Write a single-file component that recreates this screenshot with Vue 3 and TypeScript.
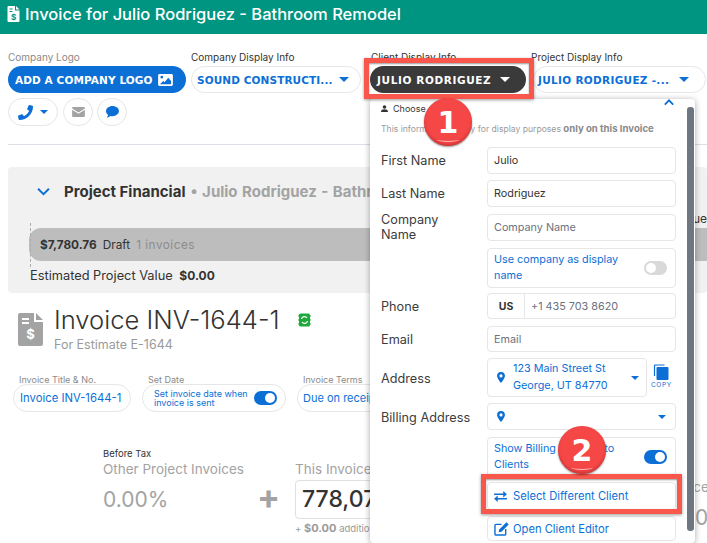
<script setup lang="ts">
const rows = [
  { label: 'First Name', value: 'Julio', filled: true },
  { label: 'Last Name', value: 'Rodriguez', filled: true },
]
</script>

<template>
  <div class="page">
    <header class="topbar">
      <svg class="doc" viewBox="0 0 12 16" width="13" height="16"><path fill="#fff" d="M1 0h6.500v4.500H12V15a1 1 0 0 1-1 1H1a1 1 0 0 1-1-1V1a1 1 0 0 1 1-1zM8.500 0 12 3.500H8.500z"/><path stroke="#009581" stroke-width="1.200" d="M2 3h3M2 5.500h3"/><text x="6" y="13.500" font-size="8" font-weight="700" text-anchor="middle" fill="#009581" font-family="Inter">$</text></svg>
      <span>Invoice for Julio Rodriguez - Bathroom Remodel</span>
    </header>

    <section class="selectors">
      <div class="selector-row">
        <div class="field w-logo">
          <label class="muted">Company Logo</label>
          <button class="pill solid">ADD A COMPANY LOGO
            <svg viewBox="0 0 16 13" width="15" height="12"><path fill="#fff" fill-rule="evenodd" d="M1.500 0h13A1.500 1.500 0 0 1 16 1.500v10a1.500 1.500 0 0 1-1.500 1.500h-13A1.500 1.500 0 0 1 0 11.500v-10A1.500 1.500 0 0 1 1.500 0zM4 2a1.500 1.500 0 1 0 0 3 1.500 1.500 0 0 0 0-3zM2 11h12V7.500L11 4 7 9 5.500 7.500z"/></svg>
          </button>
        </div>
        <div class="field w-company">
          <label>Company Display Info</label>
          <button class="pill outline"><span>SOUND CONSTRUCTI...</span><i class="caret"></i></button>
        </div>
        <div class="field w-client">
          <label>Client Display Info</label>
          <button class="pill dark"><span>JULIO RODRIGUEZ</span><i class="caret white"></i></button>
        </div>
        <div class="field w-project">
          <label>Project Display Info</label>
          <button class="pill outline"><span>JULIO RODRIGUEZ -...</span><i class="caret"></i></button>
        </div>
      </div>
      <div class="contact-row">
        <button class="round wide">
          <svg viewBox="0 0 512 512" width="15" height="15"><path fill="#0c6fd6" d="M493 24 389 0a24 24 0 0 0-27 14l-48 112a24 24 0 0 0 7 28l61 50a371 371 0 0 1-177 177l-50-61a24 24 0 0 0-28-7L15 361a24 24 0 0 0-14 28l24 104a24 24 0 0 0 23 19c256 0 464-207 464-464a24 24 0 0 0-19-24z"/></svg>
          <i class="caret small"></i>
        </button>
        <button class="round">
          <svg viewBox="0 0 14 11" width="13" height="10"><path fill="#a3a3a3" d="M1 0h12a1 1 0 0 1 1 1v.600L7 6 0 1.600V1a1 1 0 0 1 1-1zM0 3l7 4.400L14 3v7a1 1 0 0 1-1 1H1a1 1 0 0 1-1-1z"/></svg>
        </button>
        <button class="round">
          <svg viewBox="0 0 14 13" width="13" height="12"><path fill="#0c6fd6" d="M7 0c3.900 0 7 2.500 7 5.500S10.900 11 7 11c-.800 0-1.600-.100-2.300-.300C3.800 11.500 2.400 12.500.800 12.500c.800-.900 1.300-1.900 1.400-2.800C.800 8.700 0 7.200 0 5.500 0 2.500 3.100 0 7 0z"/></svg>
        </button>
      </div>
    </section>

    <hr class="rule" />

    <section class="financial">
      <div class="fin-title">
        <svg viewBox="0 0 12 8" width="13" height="9"><path d="M1 1.500 6 6.500 11 1.500" fill="none" stroke="#0c6fd6" stroke-width="1.800"/></svg>
        <b>Project Financial</b><span class="fin-sub">• Julio Rodriguez - Bathroom Remodel</span>
      </div>
      <div class="value-label">Contract Value</div>
      <div class="bar"><b>$7,780.76</b><span>Draft</span><span class="faint">1 invoices</span></div>
      <div class="est">Estimated Project Value <b>$0.00</b></div>
    </section>

    <section class="heading">
      <svg viewBox="0 0 25 33" width="25" height="33"><path fill="#a3a3a3" d="M2 0h14v9h9v22a2 2 0 0 1-2 2H2a2 2 0 0 1-2-2V2a2 2 0 0 1 2-2zM18 0l7 7h-7z"/><path stroke="#fff" stroke-width="2" d="M4 6h7M4 10h7"/><text x="12.500" y="26" font-size="13" font-weight="700" fill="#fff" text-anchor="middle" font-family="Inter">$</text></svg>
      <div class="heading-text">
        <h1>Invoice INV-1644-1
          <svg class="sync" viewBox="0 0 13 14" width="13" height="14"><rect x="1" y="0.500" width="11" height="13" rx="1.500" fill="#1fa83c"/><path d="M3.500 6A3 3 0 0 1 9 5M9.500 8A3 3 0 0 1 4 9" fill="none" stroke="#fff" stroke-width="1.300"/><path d="M0 3h1M0 7h1M0 11h1M12 3h1M12 7h1M12 11h1" stroke="#1fa83c"/></svg>
        </h1>
        <p>For Estimate E-1644</p>
      </div>
    </section>

    <section class="meta">
      <div class="meta-item">
        <label>Invoice Title &amp; No.</label>
        <div class="meta-pill title">Invoice INV-1644-1</div>
      </div>
      <div class="meta-item">
        <label>Set Date</label>
        <div class="meta-pill date"><span>Set invoice date when invoice is sent</span><i class="switch on"></i></div>
      </div>
      <div class="meta-item">
        <label>Invoice Terms</label>
        <div class="meta-pill terms">Due on receipt</div>
      </div>
    </section>

    <section class="totals">
      <div class="col-other">
        <div class="before">Before Tax</div>
        <div class="tot-label">Other Project Invoices</div>
        <div class="pct">0.00%</div>
      </div>
      <div class="plus">+</div>
      <div class="col-this">
        <div class="tot-label">This Invoice</div>
        <div class="amount">778,076.00</div>
        <div class="add">+ <b>$0.00</b> additional</div>
      </div>
      <div class="col-last">
        <div class="tot-label">Balance</div>
        <div class="pct">0</div>
      </div>
    </section>

    <aside class="panel">
      <svg class="chev" viewBox="0 0 12 8" width="10" height="7"><path d="M1 6.500 6 1.500 11 6.500" fill="none" stroke="#0c6fd6" stroke-width="2.200"/></svg>
      <div class="choose">
        <svg viewBox="0 0 10 10" width="7" height="7"><circle cx="5" cy="2.800" r="2.600" fill="#333"/><path fill="#333" d="M0 10c0-3 2-4 5-4s5 1 5 4z"/></svg>
        Choose a Client
      </div>
      <p class="note">This information is only for display purposes <b>only on this Invoice</b></p>

      <div class="form">
        <template v-for="r in rows" :key="r.label">
          <div class="lab">{{ r.label }}</div>
          <div class="inp val">{{ r.value }}</div>
        </template>
        <div class="lab two">Company<br />Name</div>
        <div class="inp ph">Company Name</div>

        <div></div>
        <div class="inp tall blue"><span>Use company as display name</span><i class="switch off"></i></div>

        <div class="lab">Phone</div>
        <div class="inp short phone"><b>US</b><span>+1 435 703 8620</span></div>

        <div class="lab">Email</div>
        <div class="inp short ph">Email</div>

        <div class="lab lab-tall">Address</div>
        <div class="addr-row">
          <div class="inp tall blue addr">
            <svg class="pin" viewBox="0 0 10 14" width="8" height="11"><path fill="#0c6fd6" fill-rule="evenodd" d="M5 0a5 5 0 0 1 5 5c0 3-5 9-5 9S0 8 0 5a5 5 0 0 1 5-5zm0 3a2 2 0 1 0 0 4 2 2 0 0 0 0-4z"/></svg>
            <span>123 Main Street St George, UT 84770</span><i class="caret small"></i>
          </div>
          <div class="copy">
            <svg viewBox="0 0 15 16" width="16" height="16"><path fill="#0c6fd6" d="M4 3h10a1 1 0 0 1 1 1v11a1 1 0 0 1-1 1H4a1 1 0 0 1-1-1V4a1 1 0 0 1 1-1z"/><path fill="none" stroke="#0c6fd6" stroke-width="1.200" d="M1 12V1.500A.900.900 0 0 1 1.500 1H11"/></svg>
            <span>COPY</span>
          </div>
        </div>

        <div class="lab lab-bill">Billing Address</div>
        <div class="inp blue bill">
          <svg class="pin" viewBox="0 0 10 14" width="8" height="11"><path fill="#0c6fd6" fill-rule="evenodd" d="M5 0a5 5 0 0 1 5 5c0 3-5 9-5 9S0 8 0 5a5 5 0 0 1 5-5zm0 3a2 2 0 1 0 0 4 2 2 0 0 0 0-4z"/></svg>
          <i class="caret small"></i>
        </div>

        <div></div>
        <div class="inp tall blue"><span>Show Billing Address to Clients</span><i class="switch on"></i></div>

        <div></div>
        <div class="inp act tallish blue">
          <svg viewBox="0 0 14 12" width="13" height="11"><path fill="none" stroke="#0c6fd6" stroke-width="1.600" d="M0 3.500h12M2 8.500h12"/><path fill="#0c6fd6" d="M10 0l4 3.500-4 3.500zM4 5v7L0 8.500z"/></svg>
          Select Different Client
        </div>

        <div></div>
        <div class="inp act edit blue">
          <svg viewBox="0 0 16 15" width="15" height="14"><path fill="none" stroke="#0c6fd6" stroke-width="1.500" d="M8 2.500H2a1 1 0 0 0-1 1V13a1 1 0 0 0 1 1h9.500a1 1 0 0 0 1-1V7.500"/><path fill="#0c6fd6" d="M13.300.300l2.400 2.400L8 10.500l-3 .600.600-3z"/></svg>
          Open Client Editor
        </div>
      </div>
      <div class="scrollbar"></div>
    </aside>

    <div class="hl hl-client"></div>
    <div class="hl hl-select"></div>
    <div class="badge b1">1</div>
    <div class="badge b2">2</div>
  </div>
</template>

<style>
html, body { margin: 0; background: #fff; overflow: hidden; }
</style>

<style scoped>
.page {
  position: relative;
  width: 707px;
  height: 543px;
  overflow: hidden;
  font-family: "Inter", "Noto Sans", sans-serif;
  color: #333;
  background: #fff;
}
.topbar {
  height: 34px;
  background: #009581;
  color: #fff;
  display: flex;
  align-items: center;
  gap: 5px;
  padding: 0 0 7px 7px;
  box-sizing: border-box;
  font-size: 16.500px;
  font-weight: 500;
  white-space: nowrap;
}
.selectors { padding: 17px 8px 0; }
.selector-row { display: flex; align-items: flex-start; gap: 5px; }
.field label { display: block; font-size: 10px; height: 15px; line-height: 13px; color: #333; white-space: nowrap; }
.field label.muted { color: #8a8a8a; }
.w-logo { width: 178px; flex: none; }
.w-company { width: 170px; flex: none; }
.w-client { width: 156px; flex: none; margin-left: 4px; }
.w-client label { padding-left: 1px; }
.w-project { width: 173px; flex: none; margin-left: 2px; }
.w-project label { margin-left: -2px; }
.pill {
  height: 27px;
  width: 100%;
  border-radius: 14px;
  box-sizing: border-box;
  border: 1px solid transparent;
  display: flex;
  align-items: center;
  justify-content: space-between;
  padding: 0 11px 0 5px;
  font-family: "DejaVu Sans", sans-serif;
  font-weight: 700;
  font-size: 10.500px;
  letter-spacing: 0.1px;
  white-space: nowrap;
}
.pill.solid { background: #0c6fd6; color: #fff; padding: 0 12px 0 6px; letter-spacing: 0.1px; }
.pill.outline { background: #fff; border-color: #e6e6e6; color: #0c6fd6; }
.pill.dark { background: #3a3a3a; color: #fff; padding: 0 15px 0 6px; letter-spacing: 0.6px; }
.w-project .pill { padding-right: 16px; padding-left: 4px; letter-spacing: 0.3px; }
.caret {
  display: inline-block;
  width: 0;
  height: 0;
  border-left: 5px solid transparent;
  border-right: 5px solid transparent;
  border-top: 5px solid #0c6fd6;
}
.caret.white { border-top-color: #fff; }
.caret.small { border-left-width: 4.500px; border-right-width: 4.500px; border-top-width: 4.500px; }
.contact-row { display: flex; gap: 4px; margin-top: 5px; }
.round {
  width: 30px;
  height: 28px;
  border: 1px solid #e6e6e6;
  border-radius: 14px;
  background: #fff;
  padding: 0;
  display: flex;
  align-items: center;
  justify-content: center;
}
.round.wide { width: 50px; gap: 7px; margin-right: 1px; }
.rule { border: 0; border-top: 1px solid #dcdfe6; margin: 18px 0 0 8px; }
.financial {
  margin: 22px 0 0 8px;
  height: 126px;
  background: #f1f1f1;
  border-radius: 4px;
  padding: 15px 0 0 22px;
  box-sizing: border-box;
}
.fin-title { display: flex; align-items: center; font-size: 15px; height: 18px; white-space: nowrap; }
.fin-title svg { margin: 0 14px 0 7px; }
.fin-title b { color: #333; font-weight: 700; }
.fin-sub { color: #a3a3a3; font-weight: 700; margin-left: 5px; word-spacing: 1px; }
.value-label { margin-top: 10px; height: 18px; line-height: 18px; font-size: 12px; text-align: right; white-space: nowrap; }
.bar {
  position: relative;
  height: 33px;
  margin-left: -1px;
  background: #bdbdbd;
  border-radius: 12px 0 0 12px;
  display: flex;
  align-items: center;
  gap: 6px;
  padding-left: 11px;
  font-size: 11.800px;
  white-space: nowrap;
}
.bar::before { content: ""; position: absolute; left: 1px; top: -5px; bottom: -6px; border-left: 1px dashed #aaa; }
.faint { color: #8c8c8c; letter-spacing: .5px; }
.est { font-size: 12.800px; margin-top: 7px; white-space: nowrap; }
.est b { margin-left: 3px; font-size: 12px; }
.heading { display: flex; gap: 11px; margin: 13px 0 0 18px; }
.heading > svg { margin-top: 7px; flex: none; }
h1 { margin: 0; font-size: 25.600px; font-weight: 300; line-height: 28px; display: flex; align-items: center; gap: 18px; white-space: nowrap; }
.heading p { margin: 3px 0 0; font-size: 12.500px; color: #9a9a9a; }
.meta { display: flex; gap: 11px; margin: 21px 0 0 13px; }
.meta-item label { display: block; font-size: 9px; color: #8a8a8a; margin-left: 6px; line-height: 13px; height: 11px; white-space: nowrap; }
.meta-pill {
  height: 28px;
  border: 1px solid #e6e6e6;
  border-radius: 14px;
  box-sizing: border-box;
  display: flex;
  align-items: center;
  color: #0c6fd6;
  font-size: 11.300px;
  white-space: nowrap;
}
.meta-pill.title { width: 118px; padding-left: 6px; }
.meta-pill.date { width: 144px; padding: 0 8px 0 11px; font-size: 9px; line-height: 9px; white-space: normal; justify-content: space-between; gap: 4px; }
.meta-pill.terms { width: 130px; padding-left: 5px; font-size: 11px; }
.switch { flex: none; display: block; width: 23px; height: 14px; border-radius: 7px; position: relative; }
.switch::after { content: ""; position: absolute; top: 2px; width: 10px; height: 10px; border-radius: 50%; background: #fff; }
.switch.on { background: #0c6fd6; }
.switch.on::after { right: 2px; }
.switch.off { background: #d9d9d9; }
.switch.off::after { left: 2px; }
.totals { display: flex; margin: 35px 0 0 103px; white-space: nowrap; }
.col-other { width: 154px; flex: none; }
.before { font-size: 9.500px; line-height: 13px; color: #333; }
.tot-label { font-size: 13.500px; color: #a3a3a3; line-height: 18px; }
.pct { font-size: 21px; color: #a3a3a3; margin-top: 7px; line-height: 30px; }
.plus { width: 38px; flex: none; font-size: 34px; color: #a3a3a3; font-weight: 700; line-height: 34px; margin-top: 33px; }
.col-this { padding-top: 13px; width: 296px; flex: none; }
.col-this .tot-label { margin-bottom: 2px; }
.amount { width: 190px; height: 39px; border: 1px solid #e0e0e0; border-radius: 4px; box-sizing: border-box; font-size: 23px; padding-left: 6px; line-height: 37px; font-weight: 500; }
.add { font-size: 9.500px; color: #9a9a9a; margin-top: 2px; }
.add b { font-size: 11px; }
.col-last { padding-top: 31px; flex: none; margin-left: 67px; }
.col-last .pct { padding-left: 37px; }

.panel {
  position: absolute;
  left: 370px;
  top: 99px;
  width: 325px;
  height: 444px;
  background: #fff;
  border-radius: 4px;
  box-shadow: 0 1px 6px rgba(0, 0, 0, .35);
  box-sizing: border-box;
  padding: 4px 19px 0 11px;
}
.chev { position: absolute; top: 0; right: 21px; }
.choose { font-size: 9px; display: flex; align-items: center; gap: 5px; height: 11px; }
.note { margin: 9px 0 0; font-size: 8.600px; line-height: 11px; color: #9a9a9a; white-space: nowrap; }
.note b { color: #8a8a8a; font-size: 9.600px; }
.form {
  display: grid;
  grid-template-columns: 106px 189px;
  grid-template-rows: 33px 34px 34px 45px 33px 32px 45px 34px 45px 34px 27px;
  margin-top: 12px;
}
.lab { font-size: 12.700px; color: #3c3c3c; display: flex; align-items: center; line-height: 15px; height: 27px; white-space: nowrap; }
.lab.two { align-items: flex-start; display: block; margin-top: -2px; }
.lab.lab-tall { height: 40px; }
.lab.lab-bill { height: 29px; }
.inp {
  border: 1px solid #e6e6e6;
  border-radius: 4px;
  box-sizing: border-box;
  height: 27px;
  display: flex;
  align-items: center;
  padding-left: 6px;
  font-size: 10.800px;
}
.short { height: 26px; }
.val { color: #333; }
.ph { color: #6b7280; }
.blue { color: #0c6fd6; }
.tall { height: 40px; padding-right: 8px; line-height: 16.500px; justify-content: space-between; gap: 14px; }
.phone { padding: 0; }
.phone b { width: 36px; height: 100%; display: flex; align-items: center; justify-content: center; border-right: 1px solid #e6e6e6; font-size: 10.500px; }
.phone span { padding-left: 6px; color: #6b7280; }
.addr-row { display: flex; align-items: flex-start; gap: 4px; }
.addr { width: 160px; height: 39px; flex: none; padding-left: 9px; gap: 0; }
.addr span { margin-left: 8px; flex: 1; }
.addr .caret { margin: 0 -1px 0 0; flex: none; }
.copy { display: flex; flex-direction: column; align-items: center; font-size: 6.500px; letter-spacing: .6px; color: #0c6fd6; gap: 1px; padding-top: 6px; }
.bill { padding: 0 9px 0 9px; justify-content: space-between; }
.act { gap: 6px; height: 26px; padding-left: 6px; font-size: 11.200px; }
.act.edit { gap: 4px; height: 25px; }
.act.tallish { height: 28px; }
.scrollbar { position: absolute; right: 1px; top: 8px; width: 7px; height: 424px; background: #6f7680; border-radius: 3px; }

.hl { position: absolute; border: 5px solid #f9564c; box-sizing: border-box; box-shadow: 0 1px 3px rgba(0,0,0,.4), inset 0 1px 2px rgba(0,0,0,.4); }
.hl-client { left: 364px; top: 58px; width: 170px; height: 41px; }
.hl-select { left: 481px; top: 474px; width: 201px; height: 40px; }
.badge {
  position: absolute;
  width: 48px;
  height: 48px;
  border-radius: 50%;
  background: #f64747;
  box-shadow: 0 1px 2px rgba(0,0,0,.45), inset 0 -2px 3px rgba(150,20,20,.35);
  color: #fff;
  font-family: "DejaVu Sans", sans-serif;
  font-weight: 700;
  font-size: 30px;
  display: flex;
  align-items: center;
  justify-content: center;
  overflow: hidden;
}
.badge::after {
  content: "";
  position: absolute;
  left: 13px;
  right: 13px;
  bottom: 4px;
  height: 4px;
  border-bottom: 1px solid rgba(255, 210, 210, .8);
  border-radius: 0 0 50% 50%;
}
.b1 { left: 424px; top: 98px; }
.b2 { left: 558px; top: 426px; }
</style>
